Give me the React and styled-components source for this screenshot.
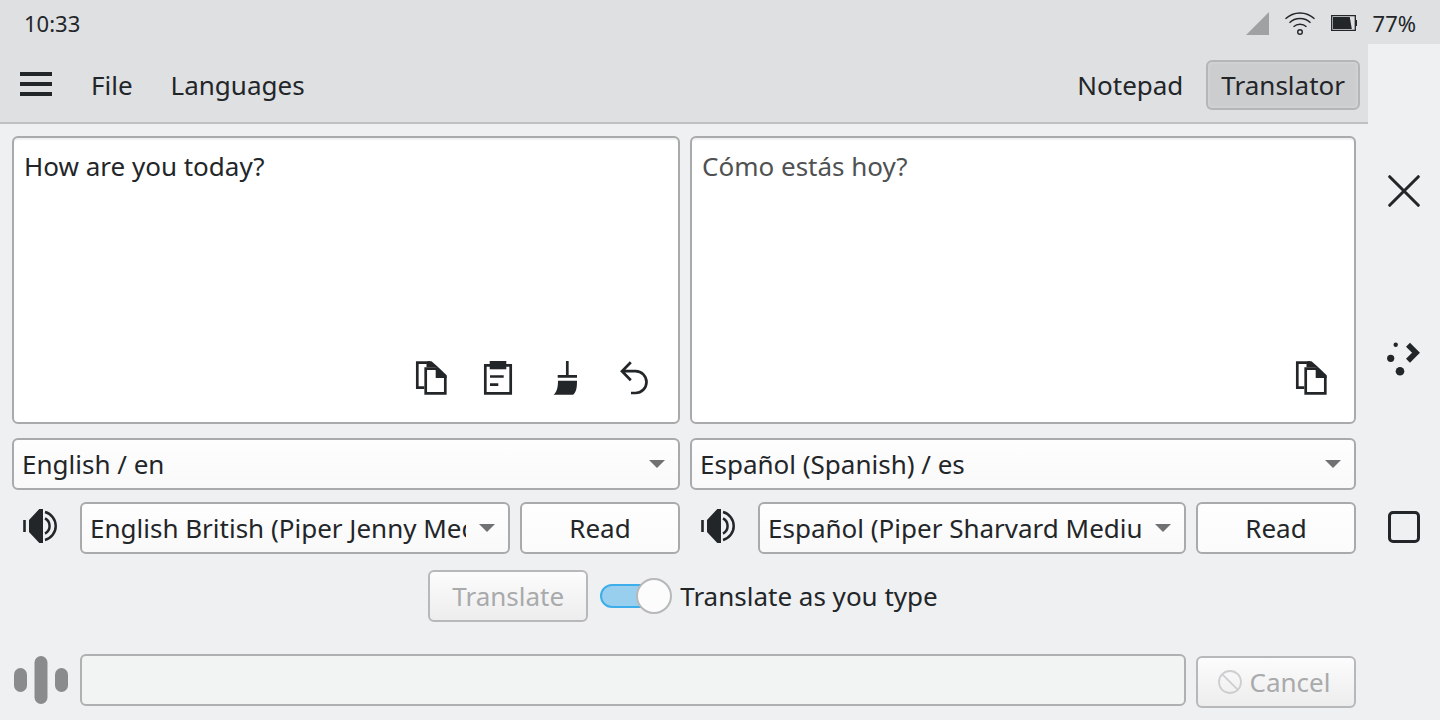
import React, { useState } from "react";
import styled, { createGlobalStyle, css } from "styled-components";

const ink = "#232629";
const edge = "#a9aaab";
const paleEdge = "#b7b8b9";
const windowBg = "#eff0f1";
const headerBg = "#dee0e2";

const GlobalStyle = createGlobalStyle`
  *, *::before, *::after { box-sizing: border-box; }
  body { margin: 0; background: ${windowBg}; }
  body, button, input, select, textarea {
    font-family: "Noto Sans", sans-serif;
    font-size: 26px;
    line-height: 36px;
    color: ${ink};
  }
  svg { display: block; flex: none; }
`;

const Screen = styled.div`
  display: flex;
  flex-direction: column;
  min-height: 100vh;
`;

const StatusBar = styled.header`
  display: flex;
  align-items: center;
  justify-content: space-between;
  height: 44px;
  padding: 2px 24px 0;
  background: ${headerBg};
  font-size: 22px;
`;

const StatusIcons = styled.div`
  display: flex;
  align-items: center;
  gap: 16px;
`;

const Workspace = styled.div`
  display: flex;
  flex: 1;
`;

const Main = styled.main`
  display: flex;
  flex-direction: column;
  flex: 1;
  min-width: 0;
`;

const MenuBar = styled.nav`
  display: flex;
  align-items: center;
  justify-content: space-between;
  height: 80px;
  padding: 4px 8px 0;
  background: ${headerBg};
  border-bottom: 2px solid #bfc0c2;
`;

const MenuButton = styled.button`
  height: 50px;
  padding: 0 13px;
  border: 2px solid transparent;
  border-radius: 6px;
  background: transparent;
  ${(p) =>
    p.$active &&
    css`
      border-color: #b5b6b8;
      background: #cccdcf;
      box-shadow: inset 0 0 0 2px #d0d1d3;
    `}
`;

const IconButton = styled.button`
  display: flex;
  align-items: center;
  justify-content: center;
  width: ${(p) => p.$width}px;
  height: ${(p) => p.$height}px;
  padding: 0;
  border: 0;
  background: transparent;
`;

const MenuGroup = styled.div`
  display: flex;
  align-items: center;
  gap: 8px;
  ${IconButton} {
    margin-right: 4px;
  }
`;

const Content = styled.div`
  display: flex;
  flex-direction: column;
  flex: 1;
  padding: 12px;
`;

const Panes = styled.div`
  display: grid;
  grid-template-columns: minmax(0, 334fr) minmax(0, 333fr);
  gap: 10px;
  flex: 1;
`;

const Pane = styled.section`
  display: flex;
  flex-direction: column;
  gap: 12px;
`;

const Editor = styled.div`
  display: flex;
  flex-direction: column;
  flex: 1;
  min-height: 200px;
  margin-bottom: 2px;
  border: 2px solid ${edge};
  border-radius: 6px;
  background: #fff;
  box-shadow: inset 0 2px 1px #f1f1f1;
`;

const EditorText = styled.textarea`
  flex: 1;
  width: 100%;
  padding: 10px;
  border: 0;
  outline: 0;
  resize: none;
  background: transparent;
  color: ${(p) => (p.readOnly ? "#4f5153" : ink)};
`;

const EditorTools = styled.div`
  display: flex;
  justify-content: flex-end;
  padding: 0 10px 10px;
`;

const Row = styled.div`
  display: flex;
  gap: 10px;
`;

const SelectBox = styled.div`
  position: relative;
  flex: 1;
  min-width: 0;
  ${(p) => p.$block && "flex: none;"}
  svg {
    position: absolute;
    top: 22px;
    right: 15px;
    pointer-events: none;
  }
`;

const Select = styled.select`
  display: block;
  width: 100%;
  height: 52px;
  padding: 0 42px 0 8px;
  appearance: none;
  border: 2px solid ${edge};
  border-radius: 6px;
  background: linear-gradient(#fefefe, #f9f9f9);
`;

const Button = styled.button`
  display: flex;
  align-items: center;
  justify-content: center;
  gap: 8px;
  flex: none;
  width: 160px;
  height: 52px;
  padding: 0;
  border: 2px solid ${edge};
  border-radius: 6px;
  background: linear-gradient(#fefefe, #fbfbfb);
  &:disabled {
    border-color: ${paleEdge};
    background: linear-gradient(#fcfcfc, #ededee);
    color: #a9aaab;
  }
`;

const TranslateRow = styled.div`
  display: flex;
  align-items: center;
  justify-content: center;
  gap: 12px;
  margin: 16px 0 32px;
  padding-right: 2px;
`;

const SwitchLabel = styled.label`
  display: flex;
  align-items: center;
  gap: 8px;
`;

const Switch = styled.input`
  display: grid;
  align-items: center;
  width: 72px;
  height: 36px;
  margin: 0;
  appearance: none;
  &::before,
  &::after {
    content: "";
    grid-area: 1 / 1;
  }
  &::before {
    width: 68px;
    height: 24px;
    border: 2px solid ${(p) => (p.checked ? "#3daee9" : edge)};
    border-radius: 12px;
    background: ${(p) => (p.checked ? "#98cfee" : "#fff")};
  }
  &::after {
    justify-self: ${(p) => (p.checked ? "end" : "start")};
    width: 36px;
    height: 36px;
    border: 2px solid ${paleEdge};
    border-radius: 50%;
    background: #fcfcfc;
  }
`;

const SpeechRow = styled.div`
  display: flex;
  align-items: flex-start;
  gap: 10px;
  ${Button} {
    margin-top: 2px;
    padding-right: 4px;
  }
`;

const SpeechField = styled.input`
  flex: 1;
  min-width: 0;
  height: 52px;
  padding: 0 10px;
  border: 2px solid #afb0b1;
  border-radius: 6px;
  outline: 0;
  background: #f2f4f3;
`;

const Rail = styled.aside`
  display: flex;
  flex-direction: column;
  justify-content: center;
  flex: none;
  width: 72px;
  padding-bottom: 46px;
`;

const Glyph = ({ size = 44, children }) => (
  <svg width={size} height={size} viewBox={`0 0 ${size} ${size}`} fill="none" stroke={ink} strokeWidth="2.7" aria-hidden="true">
    {children}
  </svg>
);

const CopyIcon = () => (
  <Glyph>
    <path d="M16.3 31.7H9.3V6.7H22" />
    <path d="M19.5 5.3H23.5L30.3 11.3H18.5V8Z" fill={ink} stroke="none" />
    <path d="M17.7 12.7H29L37.3 21V37.3H17.7Z" />
    <path d="M27.7 11.3H30.3L38.7 19.3V22H27.7Z" fill={ink} stroke="none" />
  </Glyph>
);

const PasteIcon = () => (
  <Glyph>
    <path d="M9.3 9.3H34.7V37.3H9.3Z" />
    <path d="M13.7 5H30.3V13.3H13.7Z" fill={ink} stroke="none" />
    <path d="M14 20.5H27.7M14 28.7H22.3" />
  </Glyph>
);

const BroomIcon = () => (
  <Glyph>
    <path d="M23.3 5V20M13.7 20.4H33" />
    <path d="M14 24.7H33C33 31 32.6 36 29 38.7H9.5C13 36 14 31 14 24.7Z" fill={ink} stroke="none" />
  </Glyph>
);

const UndoIcon = () => (
  <Glyph>
    <path d="M18.8 6.2L10 15.2L18.8 24.2M10 15.2H23.6A10.9 10.9 0 0 1 23.6 37H19" />
  </Glyph>
);

const SpeakerIcon = () => (
  <Glyph>
    <path d="M4.2 14H6.8V26H4.2ZM10 14L20.3 3H24V37H20.3L10 26Z" fill={ink} stroke="none" />
    <path d="M26 6A14.5 14.5 0 0 1 26 34M26 12.4A8.6 8.6 0 0 1 26 27.6" strokeWidth="2.5" />
  </Glyph>
);

const Arrow = () => (
  <svg width="16" height="8" viewBox="0 0 16 8" aria-hidden="true">
    <path d="M0 0H16L8 8Z" fill="#6f7173" />
  </svg>
);

const Dropdown = ({ label, options, block }) => (
  <SelectBox $block={block}>
    <Select aria-label={label}>
      {options.map((o) => (
        <option key={o}>{o}</option>
      ))}
    </Select>
    <Arrow />
  </SelectBox>
);

const Tool = ({ label, children }) => (
  <IconButton aria-label={label} $width={68} $height={68}>
    {children}
  </IconButton>
);

const VoiceRow = ({ label, voice }) => (
  <Row>
    <IconButton aria-label="Voice settings" $width={58} $height={52}>
      <SpeakerIcon />
    </IconButton>
    <Dropdown label={label} options={[voice]} />
    <Button>Read</Button>
  </Row>
);

export default function App() {
  const [text, setText] = useState("How are you today?");
  const [live, setLive] = useState(true);

  return (
    <>
      <GlobalStyle />
      <Screen>
        <StatusBar>
          <span>10:33</span>
          <StatusIcons>
            <svg width="24" height="24" viewBox="0 0 24 24" aria-hidden="true">
              <path d="M24 1V24H1Z" fill="#a0a1a2" />
            </svg>
            <svg width="30" height="24" viewBox="0 0 30 24" fill="none" stroke={ink} strokeWidth="1.4" aria-hidden="true">
              <path d="M.5 7.8A21 21 0 0 1 29.5 7.8M4.5 11.8A15 15 0 0 1 25.5 11.8M8.5 15.8A9.6 9.6 0 0 1 21.5 15.8" />
              <circle cx="15" cy="21" r="2.3" />
            </svg>
            <svg width="26" height="24" viewBox="0 0 26 24" aria-hidden="true">
              <path d="M.7 4.7H24.3V19.3H.7Z" fill="none" stroke={ink} strokeWidth="1.3" />
              <path d="M2 6H18.8L20.8 18H2ZM24.5 9H26V15H24.5Z" fill={ink} />
            </svg>
            <span>77%</span>
          </StatusIcons>
        </StatusBar>

        <Workspace>
          <Main>
            <MenuBar>
              <MenuGroup>
                <IconButton aria-label="Menu" $width={56} $height={50}>
                  <Glyph size={32}>
                    <path d="M0 5H32M0 15H32M0 25H32" strokeWidth="4" />
                  </Glyph>
                </IconButton>
                <MenuButton>File</MenuButton>
                <MenuButton>Languages</MenuButton>
              </MenuGroup>
              <MenuGroup>
                <MenuButton>Notepad</MenuButton>
                <MenuButton $active>Translator</MenuButton>
              </MenuGroup>
            </MenuBar>

            <Content>
              <Panes>
                <Pane>
                  <Editor>
                    <EditorText aria-label="Source text" spellCheck={false} value={text} onChange={(e) => setText(e.target.value)} />
                    <EditorTools>
                      <Tool label="Copy"><CopyIcon /></Tool>
                      <Tool label="Paste"><PasteIcon /></Tool>
                      <Tool label="Clear"><BroomIcon /></Tool>
                      <Tool label="Undo"><UndoIcon /></Tool>
                    </EditorTools>
                  </Editor>
                  <Dropdown block label="Source language" options={["English / en"]} />
                  <VoiceRow label="Source voice" voice="English British (Piper Jenny Medium)" />
                </Pane>
                <Pane>
                  <Editor>
                    <EditorText aria-label="Translation" readOnly value="Cómo estás hoy?" />
                    <EditorTools>
                      <Tool label="Copy translation"><CopyIcon /></Tool>
                    </EditorTools>
                  </Editor>
                  <Dropdown block label="Target language" options={["Español (Spanish) / es"]} />
                  <VoiceRow label="Target voice" voice="Español (Piper Sharvard Medium)" />
                </Pane>
              </Panes>

              <TranslateRow>
                <Button disabled>Translate</Button>
                <SwitchLabel>
                  <Switch type="checkbox" role="switch" checked={live} onChange={(e) => setLive(e.target.checked)} />
                  Translate as you type
                </SwitchLabel>
              </TranslateRow>

              <SpeechRow>
                <IconButton aria-label="Listen" $width={58} $height={52}>
                  <svg width="54" height="48" viewBox="0 0 54 48" fill="#8a8b8d" aria-hidden="true">
                    <rect x="0" y="12" width="13" height="24" rx="6.5" />
                    <rect x="20.5" y="0" width="13" height="48" rx="6.5" />
                    <rect x="41" y="12" width="13" height="24" rx="6.5" />
                  </svg>
                </IconButton>
                <SpeechField aria-label="Recognised speech" readOnly />
                <Button disabled>
                  <svg width="24" height="24" viewBox="0 0 24 24" fill="none" stroke="#cdcecf" strokeWidth="1.8" aria-hidden="true">
                    <circle cx="12" cy="12" r="11" />
                    <path d="M4.3 4.3L19.7 19.7" />
                  </svg>
                  Cancel
                </Button>
              </SpeechRow>
            </Content>
          </Main>

          <Rail>
            <IconButton aria-label="Close" $width={72} $height={168}>
              <Glyph size={32}>
                <path d="M1.7 1.7L30.3 30.3M30.3 1.7L1.7 30.3" strokeWidth="3" strokeLinecap="round" />
              </Glyph>
            </IconButton>
            <IconButton aria-label="Switch application" $width={72} $height={168}>
              <Glyph size={34}>
                <g fill={ink} stroke="none">
                  <circle cx="8.7" cy="2.7" r="2.2" />
                  <circle cx="3.7" cy="16.3" r="3.6" />
                  <circle cx="13" cy="29.3" r="4.3" />
                </g>
                <path d="M21 2.7L29 10.7L21 18.7" strokeWidth="5.6" />
              </Glyph>
            </IconButton>
            <IconButton aria-label="Home" $width={72} $height={168}>
              <Glyph size={32}>
                <rect x="1.5" y="1.5" width="29" height="29" rx="3.5" strokeWidth="3" />
              </Glyph>
            </IconButton>
          </Rail>
        </Workspace>
      </Screen>
    </>
  );
}
